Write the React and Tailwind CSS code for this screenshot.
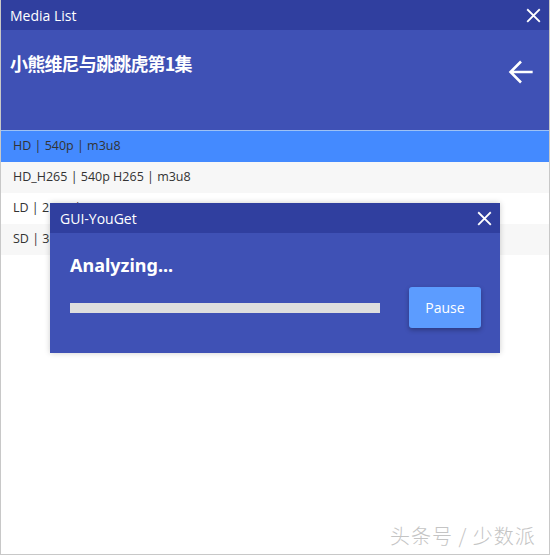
import React from "react";

function X({ cls }) {
  return (
    <svg viewBox="0 0 16 16" className={cls} fill="none" stroke="white" strokeWidth="2" strokeLinecap="square">
      <path d="M2 2L14 14M14 2L2 14" />
    </svg>
  );
}

export default function App() {
  const rows = [
    { t: "HD | 540p | m3u8", bg: "bg-[#448aff]" },
    { t: "HD_H265 | 540p H265 | m3u8", bg: "bg-[#f7f7f7]" },
    { t: "LD | 216p | m3u8", bg: "bg-white" },
    { t: "SD | 360p | m3u8", bg: "bg-[#f7f7f7]" },
  ];
  return (
    <div className="relative w-[550px] h-[555px] bg-white border-l border-r border-b border-[#c8c8c8] overflow-hidden font-['Open_Sans','Noto_Sans','Noto_Sans_CJK_SC',sans-serif]">
      <div className="h-[30px] bg-[#303f9f] flex items-center justify-between pl-[9px] pr-[6px]">
        <span className="text-white text-[14px]">Media List</span>
        <X cls="w-[15px] h-[15px] mr-[2px]" />
      </div>
      <div className="h-[100px] bg-[#3f51b5] flex justify-between pl-[9px] pr-[14px]">
        <div className="pt-[20px] text-white text-[18px] font-bold font-['Noto_Sans_CJK_SC',sans-serif] tracking-[-0.8px]">小熊维尼与跳跳虎第1集</div>
        <svg viewBox="0 0 24 24" className="w-[28px] h-[28px] mt-[28px]" fill="none" stroke="white" strokeWidth="2.2">
          <path d="M22 12H3M12 3L3 12L12 21" />
        </svg>
      </div>
      <div className="border-t border-[#9ec2f5]">
        {rows.map((r, i) => (
          <div key={i} className={`${r.bg} h-[31px] flex items-center pl-[12px] text-[12.5px] text-[#333]`}>
            {r.t}
          </div>
        ))}
      </div>
      <div className="absolute left-[49px] top-[203px] w-[450px] h-[150px] bg-[#3f51b5] shadow-[0_0_6px_rgba(0,0,0,0.2)]">
        <div className="h-[30px] bg-[#303f9f] flex items-center justify-between pl-[10px] pr-[8px]">
          <span className="text-white text-[14px]">GUI-YouGet</span>
          <X cls="w-[15px] h-[15px]" />
        </div>
        <div className="pl-[20px] pt-[19px] text-white text-[18px] font-bold font-['Noto_Sans',sans-serif]">Analyzing...</div>
        <div className="flex items-center justify-between pl-[20px] pr-[19px] mt-[8px]">
          <div className="w-[310px] h-[10px] bg-[#dedede]" />
          <div className="w-[72px] h-[41px] bg-[#5c9cff] rounded-[3px] shadow-[0_2px_5px_rgba(0,0,0,0.3)] flex items-center justify-center text-white text-[14px]">Pause</div>
        </div>
      </div>
      <div className="absolute left-[389px] top-[521px] text-[20px] text-[#c4c4c4] font-['Noto_Sans_CJK_SC',sans-serif] font-light tracking-[1px]">头条号 / 少数派</div>
    </div>
  );
}
